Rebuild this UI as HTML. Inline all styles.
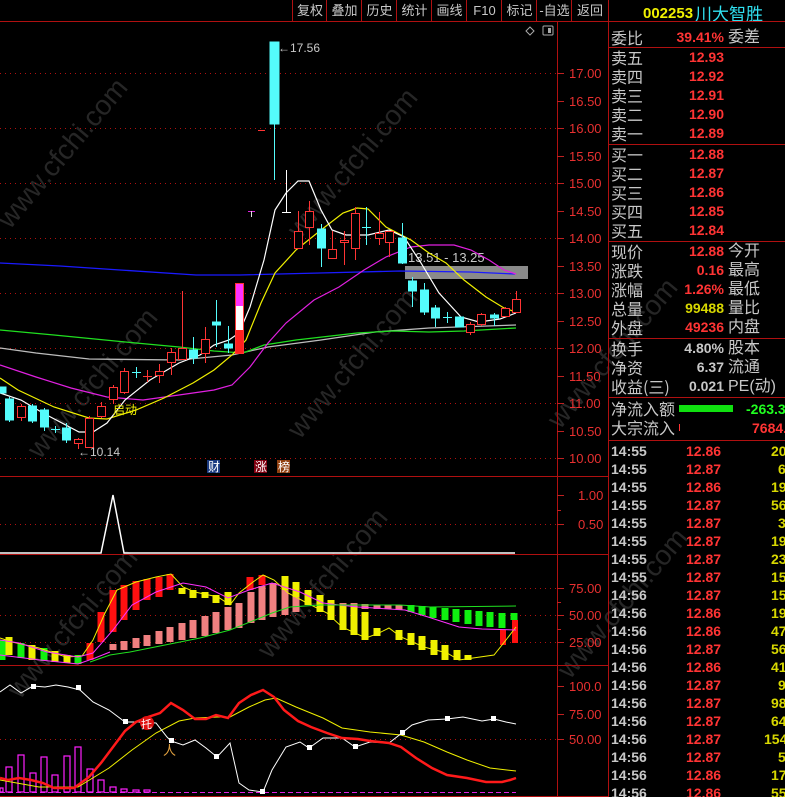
<!DOCTYPE html>
<html><head><meta charset="utf-8">
<style>
html,body{margin:0;padding:0;background:#000;width:785px;height:797px;overflow:hidden;position:relative;font-family:"Liberation Sans","Noto Sans CJK SC",sans-serif;}
.a{position:absolute;white-space:nowrap;line-height:1;}
.tb{position:absolute;top:0;height:21px;color:#c8c8c8;font-size:13px;line-height:21px;text-align:center;border-left:1px solid #b01010;}
.lb{position:absolute;left:611px;color:#c8c8c8;font-size:16px;line-height:19px;font-family:"Noto Sans CJK SC",sans-serif;}
.vl{position:absolute;width:110px;left:614px;text-align:right;font-size:14px;font-weight:bold;line-height:19px;}
.sx{position:absolute;left:728px;color:#c8c8c8;font-size:16px;line-height:19px;font-family:"Liberation Sans","Noto Sans CJK SC",sans-serif;}
.r{color:#ff3434}.y{color:#d8d800}.w{color:#c8c8c8}.g{color:#20ff20}
.tk{position:absolute;left:611px;width:200px;height:18px;font-size:14px;font-weight:bold;line-height:18px;}
.tk span{position:absolute;}
.hl{position:absolute;left:608px;width:177px;height:1px;background:#b01010;}
</style></head><body>
<svg width="785" height="797" style="position:absolute;left:0;top:0">
<g font-family="Liberation Sans,sans-serif" font-size="28" fill="#262626" >
<text transform="translate(10,230) rotate(-50)">www.cfchi.com</text>
<text transform="translate(300,240) rotate(-50)">www.cfchi.com</text>
<text transform="translate(40,460) rotate(-50)">www.cfchi.com</text>
<text transform="translate(300,440) rotate(-50)">www.cfchi.com</text>
<text transform="translate(20,700) rotate(-50)">www.cfchi.com</text>
<text transform="translate(270,660) rotate(-50)">www.cfchi.com</text>
<text transform="translate(570,680) rotate(-50)">www.cfchi.com</text>
<text transform="translate(560,430) rotate(-50)">www.cfchi.com</text>
</g>
<!-- frame lines -->
<g stroke="#b01010" stroke-width="1">
<line x1="0" y1="21.5" x2="608" y2="21.5"/>
<line x1="557.5" y1="21" x2="557.5" y2="797"/>
<line x1="608.5" y1="0" x2="608.5" y2="797"/>
<line x1="0" y1="476.5" x2="608" y2="476.5"/>
<line x1="0" y1="554.5" x2="608" y2="554.5"/>
<line x1="0" y1="665.5" x2="608" y2="665.5"/>
<line x1="0" y1="796.5" x2="608" y2="796.5"/>
</g>
<!-- grid -->
<g stroke="#b01010" stroke-dasharray="1,4">
<line x1="0" y1="73.5" x2="557" y2="73.5"/><line x1="0" y1="128.5" x2="557" y2="128.5"/>
<line x1="0" y1="183.5" x2="557" y2="183.5"/><line x1="0" y1="238.5" x2="557" y2="238.5"/>
<line x1="0" y1="293.5" x2="557" y2="293.5"/><line x1="0" y1="348.5" x2="557" y2="348.5"/>
<line x1="0" y1="403.5" x2="557" y2="403.5"/><line x1="0" y1="458.5" x2="557" y2="458.5"/>
<line x1="0" y1="524.5" x2="557" y2="524.5"/>
<line x1="0" y1="588.5" x2="557" y2="588.5"/><line x1="0" y1="615.5" x2="557" y2="615.5"/><line x1="0" y1="642.5" x2="557" y2="642.5"/>
<line x1="0" y1="739.5" x2="557" y2="739.5"/>
</g>
<!-- axis ticks -->
<g stroke="#c02020">
<line x1="557" y1="73.5" x2="564" y2="73.5"/><line x1="557" y1="101.5" x2="564" y2="101.5"/><line x1="557" y1="128.5" x2="564" y2="128.5"/><line x1="557" y1="156.5" x2="564" y2="156.5"/><line x1="557" y1="183.5" x2="564" y2="183.5"/><line x1="557" y1="211.5" x2="564" y2="211.5"/><line x1="557" y1="238.5" x2="564" y2="238.5"/><line x1="557" y1="266.5" x2="564" y2="266.5"/><line x1="557" y1="293.5" x2="564" y2="293.5"/><line x1="557" y1="321.5" x2="564" y2="321.5"/><line x1="557" y1="348.5" x2="564" y2="348.5"/><line x1="557" y1="376.5" x2="564" y2="376.5"/><line x1="557" y1="403.5" x2="564" y2="403.5"/><line x1="557" y1="431.5" x2="564" y2="431.5"/><line x1="557" y1="458.5" x2="564" y2="458.5"/>
<line x1="557" y1="495.5" x2="564" y2="495.5"/><line x1="557" y1="510.5" x2="561" y2="510.5"/><line x1="557" y1="524.5" x2="564" y2="524.5"/>
<line x1="557" y1="588.5" x2="564" y2="588.5"/><line x1="557" y1="602.5" x2="561" y2="602.5"/><line x1="557" y1="615.5" x2="564" y2="615.5"/><line x1="557" y1="629.5" x2="561" y2="629.5"/><line x1="557" y1="642.5" x2="564" y2="642.5"/>
<line x1="557" y1="686.5" x2="564" y2="686.5"/><line x1="557" y1="714.5" x2="564" y2="714.5"/><line x1="557" y1="739.5" x2="564" y2="739.5"/>
</g>
<g fill="#e83030" font-size="13" font-family="Liberation Sans,sans-serif">
<text x="569" y="78">17.00</text><text x="569" y="106">16.50</text><text x="569" y="133">16.00</text><text x="569" y="161">15.50</text><text x="569" y="188">15.00</text><text x="569" y="216">14.50</text><text x="569" y="243">14.00</text><text x="569" y="271">13.50</text><text x="569" y="298">13.00</text><text x="569" y="326">12.50</text><text x="569" y="353">12.00</text><text x="569" y="381">11.50</text><text x="569" y="408">11.00</text><text x="569" y="436">10.50</text><text x="569" y="463">10.00</text>
<text x="578" y="500">1.00</text><text x="578" y="529">0.50</text>
<text x="569" y="593">75.00</text><text x="569" y="620">50.00</text><text x="569" y="647">25.00</text>
<text x="569" y="691">100.0</text><text x="569" y="719">75.00</text><text x="569" y="744">50.00</text>
</g>
<!-- top icons -->
<path d="M530 27 L534 31 L530 35 L526 31 Z" fill="none" stroke="#aaa"/>
<rect x="543" y="26" width="10" height="9" fill="none" stroke="#aaa" rx="1"/><rect x="548" y="28" width="3" height="5" fill="#aaa"/>
<!-- gray box -->
<rect x="405" y="266" width="123" height="13" fill="#8a8a8a"/>
<text x="408" y="262" fill="#c8c8c8" font-size="13">13.51 - 13.25</text>
<!-- MA lines -->
<polyline fill="none" stroke="#1a1aff" stroke-width="1.3" points="0,263 60,266 120,270 196,275 240,275 320,273 400,271 470,272 515,274"/>
<polyline fill="none" stroke="#bdbdbd" stroke-width="1.3" points="0,348 36,353 89,359 179,360 232,355 268,347 321,340 375,332 429,328 516,325"/>
<polyline fill="none" stroke="#20e020" stroke-width="1.3" points="0,330 54,335 136,343 179,347 214,351 243,353 264,345 296,340 357,333 393,331 429,332 464,331 516,328"/>
<polyline fill="none" stroke="#e020e0" stroke-width="1.2" points="0,365 36,377 71,388 107,397 143,400 179,395 214,390 232,385 250,367 268,343 286,323 314,300 339,287 364,270 386,257 411,247 429,245 454,245 471,250 489,260 504,270 516,274"/>
<polyline fill="none" stroke="#f0f000" stroke-width="1.2" points="0,378 18,390 54,407 89,418 107,419 136,410 164,398 193,383 214,370 232,355 246,340 261,303 275,273 296,250 321,230 343,213 357,208 368,209 386,227 411,240 429,253 446,263 464,280 486,297 504,308 516,312"/>
<polyline fill="none" stroke="#ffffff" stroke-width="1.2" points="0,393 21,400 43,413 79,432 93,432 107,423 125,400 150,380 179,363 200,355 214,345 229,340 239,333 250,307 264,260 275,210 286,193 298,181 309,181 321,210 332,230 346,235 368,235 389,230 404,237 421,263 439,293 461,317 479,322 500,319 516,313"/>
<!-- candles -->
<g stroke="#ff3434" fill="#000" stroke-width="1">
<line x1="21.5" y1="404" x2="21.5" y2="421"/><rect x="17.5" y="406.5" width="8" height="11"/>
<line x1="78.5" y1="438" x2="78.5" y2="449"/><rect x="74.5" y="439.5" width="8" height="4"/>
<line x1="89.5" y1="416" x2="89.5" y2="448"/><rect x="85.5" y="418.5" width="8" height="29"/>
<line x1="101.5" y1="402" x2="101.5" y2="418"/><rect x="97.5" y="406.5" width="8" height="10"/>
<line x1="113.5" y1="385" x2="113.5" y2="404"/><rect x="109.5" y="387.5" width="8" height="12"/>
<line x1="124.5" y1="368" x2="124.5" y2="394"/><rect x="120.5" y="371.5" width="8" height="21"/>
<line x1="147.5" y1="370" x2="147.5" y2="382"/><line x1="143" y1="376.5" x2="152" y2="376.5"/>
<line x1="159.5" y1="364" x2="159.5" y2="383"/><rect x="155.5" y="371.5" width="8" height="4"/>
<line x1="171.5" y1="348" x2="171.5" y2="375"/><rect x="167.5" y="352.5" width="8" height="10"/>
<line x1="182.5" y1="291" x2="182.5" y2="360"/><rect x="178.5" y="348.5" width="8" height="11"/>
<line x1="205.5" y1="327" x2="205.5" y2="363"/><rect x="201.5" y="339.5" width="8" height="14"/>
<line x1="298.5" y1="211" x2="298.5" y2="248"/><rect x="294.5" y="231.5" width="8" height="17"/>
<line x1="309.5" y1="201" x2="309.5" y2="245"/><rect x="305.5" y="211.5" width="8" height="16"/>
<line x1="332.5" y1="231" x2="332.5" y2="259"/><rect x="328.5" y="249.5" width="8" height="9"/>
<line x1="344.5" y1="231" x2="344.5" y2="265"/><rect x="340.5" y="240.5" width="8" height="2"/>
<line x1="355.5" y1="207" x2="355.5" y2="260"/><rect x="351.5" y="213.5" width="8" height="35"/>
<line x1="379.5" y1="212" x2="379.5" y2="245"/><rect x="375.5" y="233.5" width="8" height="5"/>
<line x1="389.5" y1="231" x2="389.5" y2="257"/><rect x="385.5" y="231.5" width="8" height="11"/>
<line x1="470.5" y1="322" x2="470.5" y2="335"/><rect x="466.5" y="324.5" width="8" height="8"/>
<line x1="481.5" y1="313" x2="481.5" y2="326"/><rect x="477.5" y="314.5" width="8" height="10"/>
<line x1="505.5" y1="307" x2="505.5" y2="316"/><rect x="501.5" y="308.5" width="8" height="8"/>
<line x1="516.5" y1="291" x2="516.5" y2="312"/><rect x="512.5" y="299.5" width="8" height="13"/>
<line x1="258" y1="130.5" x2="265" y2="130.5"/>
</g>
<g stroke="#54fcfc" fill="#54fcfc">
<rect x="0" y="387" width="6" height="6"/>
<line x1="9.5" y1="397" x2="9.5" y2="422"/><rect x="5.5" y="399" width="8" height="21"/>
<line x1="32.5" y1="404" x2="32.5" y2="423"/><rect x="28.5" y="406" width="8" height="15"/>
<line x1="44.5" y1="408" x2="44.5" y2="431"/><rect x="40.5" y="410" width="8" height="17"/>
<line x1="55.5" y1="426" x2="55.5" y2="433"/><line x1="51" y1="429.5" x2="60" y2="429.5"/>
<line x1="66.5" y1="423" x2="66.5" y2="443"/><rect x="62.5" y="428" width="8" height="12"/>
<line x1="136.5" y1="367" x2="136.5" y2="378"/><line x1="132" y1="372.5" x2="141" y2="372.5"/>
<line x1="193.5" y1="337" x2="193.5" y2="364"/><rect x="189.5" y="350" width="8" height="8"/>
<line x1="216.5" y1="300" x2="216.5" y2="347"/><rect x="212.5" y="322" width="8" height="3"/>
<line x1="228.5" y1="326" x2="228.5" y2="353"/><rect x="224.5" y="344" width="8" height="4"/>
<line x1="274.5" y1="42" x2="274.5" y2="180"/><rect x="270" y="42" width="9" height="82"/>
<line x1="321.5" y1="224" x2="321.5" y2="267"/><rect x="317.5" y="229" width="8" height="19"/>
<line x1="366.5" y1="207" x2="366.5" y2="245"/><line x1="362" y1="227.5" x2="371" y2="227.5"/>
<line x1="402.5" y1="223" x2="402.5" y2="264"/><rect x="398.5" y="238" width="8" height="25"/>
<line x1="412.5" y1="277" x2="412.5" y2="307"/><rect x="408.5" y="281" width="8" height="10"/>
<line x1="424.5" y1="283" x2="424.5" y2="315"/><rect x="420.5" y="290" width="8" height="22"/>
<line x1="435.5" y1="305" x2="435.5" y2="327"/><rect x="431.5" y="308" width="8" height="10"/>
<line x1="447.5" y1="312" x2="447.5" y2="323"/><line x1="443" y1="317.5" x2="452" y2="317.5"/>
<rect x="455.5" y="317" width="8" height="10"/>
<line x1="494.5" y1="313" x2="494.5" y2="326"/><rect x="490.5" y="315" width="8" height="3"/>
</g>
<line x1="286.5" y1="170" x2="286.5" y2="213" stroke="#fff"/><line x1="282" y1="212.5" x2="291" y2="212.5" stroke="#fff"/>
<line x1="248" y1="211.5" x2="255" y2="211.5" stroke="#e020e0"/><line x1="251.5" y1="211" x2="251.5" y2="217" stroke="#ddd"/>
<rect x="235.5" y="283.5" width="8" height="70" fill="#ff2020" stroke="#ff3434"/>
<rect x="236" y="284" width="7" height="22" fill="#ff30ff"/><rect x="236" y="306" width="7" height="24" fill="#fff"/>
<text x="278" y="52" fill="#c8c8c8" font-size="12">←17.56</text>
<text x="78" y="456" fill="#c8c8c8" font-size="12">←10.14</text>
<text x="113" y="414" fill="#f0f000" font-size="12" font-family="Noto Sans CJK SC,sans-serif">启动</text>
<rect x="207" y="460" width="13" height="13" fill="#1a3a80"/><text x="208" y="471" fill="#fff" font-size="12" font-family="Noto Sans CJK SC,sans-serif">财</text>
<rect x="254" y="460" width="13" height="13" fill="#800010"/><text x="255" y="471" fill="#fff" font-size="12" font-family="Noto Sans CJK SC,sans-serif">涨</text>
<rect x="277" y="460" width="13" height="13" fill="#904010"/><text x="278" y="471" fill="#fff" font-size="12" font-family="Noto Sans CJK SC,sans-serif">榜</text>
<!-- panel 2 -->
<polyline fill="none" stroke="#fff" stroke-width="1.5" points="0,553 101,553 113,495 124,553 515,553"/>
<!-- panel 3 bars -->
<g stroke-width="7">
<line x1="2" y1="640" x2="2" y2="660" stroke="#10f010"/><line x1="9" y1="637" x2="9" y2="655" stroke="#f0f000"/>
<line x1="21" y1="643" x2="21" y2="658" stroke="#10f010"/><line x1="32" y1="645" x2="32" y2="660" stroke="#f0f000"/>
<line x1="44" y1="648" x2="44" y2="661" stroke="#10f010"/><line x1="55" y1="651" x2="55" y2="662" stroke="#f0f000"/>
<line x1="67" y1="655" x2="67" y2="663" stroke="#f0f000"/><line x1="78" y1="655" x2="78" y2="664" stroke="#10f010"/>
<line x1="90" y1="643" x2="90" y2="660" stroke="#ff1010"/><line x1="101" y1="612" x2="101" y2="642" stroke="#ff1010"/>
<line x1="113" y1="590" x2="113" y2="632" stroke="#ff1010"/><line x1="124" y1="585" x2="124" y2="620" stroke="#ff1010"/>
<line x1="136" y1="581" x2="136" y2="610" stroke="#ff1010"/><line x1="147" y1="579" x2="147" y2="600" stroke="#ff1010"/>
<line x1="159" y1="577" x2="159" y2="597" stroke="#ff1010"/><line x1="170" y1="574" x2="170" y2="590" stroke="#ff1010"/>
<line x1="182" y1="588" x2="182" y2="594" stroke="#f0f000"/><line x1="193" y1="590" x2="193" y2="598" stroke="#f0f000"/>
<line x1="205" y1="592" x2="205" y2="598" stroke="#f0f000"/><line x1="216" y1="595" x2="216" y2="603" stroke="#f0f000"/>
<line x1="228" y1="592" x2="228" y2="605" stroke="#f0f000"/>
<line x1="250" y1="577" x2="250" y2="590" stroke="#ff1010"/><line x1="262" y1="575" x2="262" y2="585" stroke="#ff1010"/>
</g>
<g stroke-width="7" stroke="#f08080">
<line x1="113" y1="644" x2="113" y2="650"/><line x1="124" y1="641" x2="124" y2="650"/><line x1="136" y1="638" x2="136" y2="648"/>
<line x1="147" y1="635" x2="147" y2="646"/><line x1="159" y1="631" x2="159" y2="644"/><line x1="170" y1="627" x2="170" y2="642"/>
<line x1="182" y1="623" x2="182" y2="640"/><line x1="193" y1="620" x2="193" y2="638"/><line x1="205" y1="616" x2="205" y2="636"/>
<line x1="216" y1="612" x2="216" y2="633"/><line x1="228" y1="607" x2="228" y2="630"/><line x1="239" y1="603" x2="239" y2="628"/>
<line x1="251" y1="592" x2="251" y2="623"/><line x1="262" y1="586" x2="262" y2="620"/><line x1="273" y1="583" x2="273" y2="617"/>
<line x1="285" y1="584" x2="285" y2="615"/><line x1="296" y1="590" x2="296" y2="612"/>
<line x1="320" y1="600" x2="320" y2="607"/><line x1="331" y1="603" x2="331" y2="607"/><line x1="343" y1="603" x2="343" y2="608"/>
<line x1="354" y1="603" x2="354" y2="608"/><line x1="365" y1="604" x2="365" y2="609"/><line x1="377" y1="605" x2="377" y2="609"/>
<line x1="388" y1="605" x2="388" y2="609"/><line x1="399" y1="605" x2="399" y2="610"/>
</g>
<g stroke-width="7" stroke="#f0f000">
<line x1="285" y1="576" x2="285" y2="590"/><line x1="296" y1="582" x2="296" y2="597"/><line x1="308" y1="590" x2="308" y2="605"/>
<line x1="320" y1="595" x2="320" y2="612"/><line x1="331" y1="600" x2="331" y2="620"/><line x1="343" y1="605" x2="343" y2="630"/>
<line x1="354" y1="607" x2="354" y2="635"/><line x1="365" y1="612" x2="365" y2="640"/><line x1="377" y1="628" x2="377" y2="636"/>
<line x1="399" y1="630" x2="399" y2="640"/><line x1="411" y1="633" x2="411" y2="645"/><line x1="422" y1="636" x2="422" y2="650"/>
<line x1="434" y1="640" x2="434" y2="655"/><line x1="445" y1="645" x2="445" y2="660"/><line x1="457" y1="650" x2="457" y2="660"/>
<line x1="468" y1="655" x2="468" y2="660"/>
</g>
<g stroke-width="7" stroke="#10f010">
<line x1="411" y1="605" x2="411" y2="612"/><line x1="422" y1="606" x2="422" y2="615"/><line x1="433" y1="607" x2="433" y2="618"/>
<line x1="445" y1="608" x2="445" y2="620"/><line x1="456" y1="609" x2="456" y2="622"/><line x1="468" y1="610" x2="468" y2="624"/>
<line x1="479" y1="611" x2="479" y2="626"/><line x1="490" y1="612" x2="490" y2="627"/><line x1="502" y1="613" x2="502" y2="628"/>
<line x1="514" y1="613" x2="514" y2="620"/>
</g>
<g stroke-width="6" stroke="#ff1010"><line x1="503" y1="630" x2="503" y2="645"/><line x1="515" y1="620" x2="515" y2="643"/></g>
<polyline fill="none" stroke="#f0f000" points="0,638 12,642 39,648 66,657 82,656 93,640 105,613 117,590 136,582 156,577 171,574 183,587 195,592 218,597 230,605 239,593 253,582 263,575 274,580 288,593 307,603 327,613 342,627 366,638 379,633 389,628 401,637 424,647 447,653 459,660 473,658 494,655 506,640 516,627"/>
<polyline fill="none" stroke="#ff30ff" points="0,640 19,643 47,652 78,657 93,653 113,630 132,605 156,592 183,583 206,587 228,598 249,590 272,583 300,592 323,603 339,605 358,607 405,610 428,617 459,627 482,629 516,630"/>
<polyline fill="none" stroke="#20e020" points="90,662 110,655 130,652 150,648 200,638 230,630 260,618 272,613 290,607 320,605 400,605 430,607 516,606"/>
<polyline fill="none" stroke="#ff30ff" points="0,655 40,660 78,664 95,658 110,652"/>
<!-- panel 4 -->
<line x1="0" y1="792.5" x2="516" y2="792.5" stroke="#e020e0" stroke-dasharray="5,3"/>
<g fill="none" stroke="#ff20ff" stroke-width="1.2">
<rect x="0" y="788" width="3" height="4"/><rect x="6" y="767" width="6" height="25"/><rect x="18" y="755" width="6" height="37"/>
<rect x="30" y="773" width="6" height="19"/><rect x="41" y="757" width="6" height="35"/><rect x="52" y="775" width="6" height="17"/>
<rect x="64" y="756" width="6" height="36"/><rect x="75" y="747" width="6" height="45"/><rect x="87" y="769" width="6" height="23"/>
<rect x="98" y="780" width="6" height="12"/><rect x="110" y="787" width="6" height="5"/><rect x="121" y="789" width="6" height="3"/>
<rect x="133" y="790" width="6" height="2"/><rect x="144" y="790" width="6" height="2"/>
</g>
<polyline fill="none" stroke="#f0f000" points="0,780 39,787 78,787 109,768 132,750 156,733 179,721 195,718 218,717 230,717 249,707 265,700 276,698 296,707 323,718 342,728 370,732 401,735 424,742 447,752 467,760 490,768 516,771"/>
<polyline fill="none" stroke="#ffffff" points="0,692 10,685 21,693 33,686 45,687 56,685 68,687 80,690 93,702 109,710 125,722 140,722 156,723 167,737 171,741 183,745 195,740 206,748 217,757 230,743 239,783 249,790 263,792 272,770 286,747 300,742 309,748 323,738 342,738 355,747 370,742 389,743 402,733 412,725 428,720 447,719 463,717 482,721 494,719 506,722 516,724"/>
<g fill="#fff"><rect x="31" y="684" width="5" height="5"/><rect x="76" y="685" width="5" height="5"/><rect x="123" y="719" width="5" height="5"/><rect x="169" y="738" width="5" height="5"/><rect x="214" y="754" width="5" height="5"/><rect x="260" y="789" width="5" height="5"/><rect x="307" y="745" width="5" height="5"/><rect x="353" y="744" width="5" height="5"/><rect x="400" y="730" width="5" height="5"/><rect x="445" y="716" width="5" height="5"/><rect x="491" y="716" width="5" height="5"/></g>
<polyline fill="none" stroke="#ff1a1a" stroke-width="2.5" points="0,778 8,780 19,778 31,780 43,783 54,788 74,788 89,777 101,763 113,747 125,731 136,722 148,717 160,713 171,703 183,710 195,719 206,719 216,715 228,718 239,703 251,695 263,690 274,697 284,710 298,721 311,727 327,733 342,738 358,739 370,741 389,743 401,747 416,758 432,768 447,775 467,778 486,782 502,782 510,780 516,778"/>
<circle cx="147" cy="723" r="7" fill="#e01010"/><text x="141" y="728" fill="#fff" font-size="11" font-family="Noto Sans CJK SC,sans-serif">托</text>
<text x="163" y="755" fill="#e0a040" font-size="13">人</text>
</svg>

<!-- toolbar -->
<div class="tb" style="left:292px;width:34px">复权</div>
<div class="tb" style="left:326px;width:35px">叠加</div>
<div class="tb" style="left:361px;width:35px">历史</div>
<div class="tb" style="left:396px;width:35px">统计</div>
<div class="tb" style="left:431px;width:35px">画线</div>
<div class="tb" style="left:466px;width:35px">F10</div>
<div class="tb" style="left:501px;width:35px">标记</div>
<div class="tb" style="left:536px;width:35px">-自选</div>
<div class="tb" style="left:571px;width:36px">返回</div>

<!-- right panel -->
<div class="a" style="left:643px;top:6px;font-size:15px;font-weight:bold;color:#f0f000">002253</div>
<div class="a" style="left:695px;top:4px;font-size:17px;color:#30e0f0;font-family:'Noto Sans CJK SC',sans-serif">川大智胜</div>
<div class="hl" style="top:21px"></div>
<div class="lb" style="top:28px">委比</div><div class="vl r" style="top:28px">39.41%</div><div class="sx" style="top:28px">委差</div>
<div class="hl" style="top:47px"></div>
<div class="lb" style="top:48px">卖五</div><div class="vl r" style="top:48px">12.93</div>
<div class="lb" style="top:67px">卖四</div><div class="vl r" style="top:67px">12.92</div>
<div class="lb" style="top:86px">卖三</div><div class="vl r" style="top:86px">12.91</div>
<div class="lb" style="top:105px">卖二</div><div class="vl r" style="top:105px">12.90</div>
<div class="lb" style="top:124px">卖一</div><div class="vl r" style="top:124px">12.89</div>
<div class="hl" style="top:144px"></div>
<div class="lb" style="top:145px">买一</div><div class="vl r" style="top:145px">12.88</div>
<div class="lb" style="top:164px">买二</div><div class="vl r" style="top:164px">12.87</div>
<div class="lb" style="top:183px">买三</div><div class="vl r" style="top:183px">12.86</div>
<div class="lb" style="top:202px">买四</div><div class="vl r" style="top:202px">12.85</div>
<div class="lb" style="top:221px">买五</div><div class="vl r" style="top:221px">12.84</div>
<div class="hl" style="top:241px"></div>
<div class="lb" style="top:242px">现价</div><div class="vl r" style="top:242px">12.88</div><div class="sx" style="top:242px">今开</div>
<div class="lb" style="top:261px">涨跌</div><div class="vl r" style="top:261px">0.16</div><div class="sx" style="top:261px">最高</div>
<div class="lb" style="top:280px">涨幅</div><div class="vl r" style="top:280px">1.26%</div><div class="sx" style="top:280px">最低</div>
<div class="lb" style="top:299px">总量</div><div class="vl y" style="top:299px">99488</div><div class="sx" style="top:299px">量比</div>
<div class="lb" style="top:318px">外盘</div><div class="vl r" style="top:318px">49236</div><div class="sx" style="top:318px">内盘</div>
<div class="hl" style="top:338px"></div>
<div class="lb" style="top:339px">换手</div><div class="vl w" style="top:339px">4.80%</div><div class="sx" style="top:339px">股本</div>
<div class="lb" style="top:358px">净资</div><div class="vl w" style="top:358px">6.37</div><div class="sx" style="top:358px">流通</div>
<div class="lb" style="top:377px">收益(三)</div><div class="vl w" style="top:377px">0.021</div><div class="sx" style="top:377px">PE(动)</div>
<div class="hl" style="top:397px"></div>
<div class="lb" style="top:399px">净流入额</div>
<div style="position:absolute;left:679px;top:405px;width:54px;height:7px;background:#10e010"></div>
<div class="a g" style="left:746px;top:402px;font-size:14px;font-weight:bold">-263.3</div>
<div class="lb" style="top:418px">大宗流入</div>
<div style="position:absolute;left:679px;top:424px;width:1px;height:7px;background:#ff3434"></div>
<div class="a r" style="left:752px;top:421px;font-size:14px;font-weight:bold">7684.</div>
<div class="hl" style="top:440px"></div>

<div class="tk" style="top:442px"><span class="w">14:55</span><span class="r" style="left:75px">12.86</span><span class="y" style="left:160px">209</span></div>
<div class="tk" style="top:460px"><span class="w">14:55</span><span class="r" style="left:75px">12.87</span><span class="y" style="left:167px">62</span></div>
<div class="tk" style="top:478px"><span class="w">14:55</span><span class="r" style="left:75px">12.86</span><span class="y" style="left:160px">191</span></div>
<div class="tk" style="top:496px"><span class="w">14:55</span><span class="r" style="left:75px">12.87</span><span class="y" style="left:160px">563</span></div>
<div class="tk" style="top:514px"><span class="w">14:55</span><span class="r" style="left:75px">12.87</span><span class="y" style="left:167px">35</span></div>
<div class="tk" style="top:532px"><span class="w">14:55</span><span class="r" style="left:75px">12.87</span><span class="y" style="left:160px">190</span></div>
<div class="tk" style="top:550px"><span class="w">14:55</span><span class="r" style="left:75px">12.87</span><span class="y" style="left:160px">231</span></div>
<div class="tk" style="top:568px"><span class="w">14:55</span><span class="r" style="left:75px">12.87</span><span class="y" style="left:160px">150</span></div>
<div class="tk" style="top:586px"><span class="w">14:56</span><span class="r" style="left:75px">12.87</span><span class="y" style="left:160px">152</span></div>
<div class="tk" style="top:604px"><span class="w">14:56</span><span class="r" style="left:75px">12.86</span><span class="y" style="left:160px">190</span></div>
<div class="tk" style="top:622px"><span class="w">14:56</span><span class="r" style="left:75px">12.86</span><span class="y" style="left:160px">470</span></div>
<div class="tk" style="top:640px"><span class="w">14:56</span><span class="r" style="left:75px">12.87</span><span class="y" style="left:160px">560</span></div>
<div class="tk" style="top:658px"><span class="w">14:56</span><span class="r" style="left:75px">12.86</span><span class="y" style="left:160px">410</span></div>
<div class="tk" style="top:676px"><span class="w">14:56</span><span class="r" style="left:75px">12.87</span><span class="y" style="left:167px">93</span></div>
<div class="tk" style="top:694px"><span class="w">14:56</span><span class="r" style="left:75px">12.87</span><span class="y" style="left:160px">980</span></div>
<div class="tk" style="top:712px"><span class="w">14:56</span><span class="r" style="left:75px">12.87</span><span class="y" style="left:160px">640</span></div>
<div class="tk" style="top:730px"><span class="w">14:56</span><span class="r" style="left:75px">12.87</span><span class="y" style="left:153px">1540</span></div>
<div class="tk" style="top:748px"><span class="w">14:56</span><span class="r" style="left:75px">12.87</span><span class="y" style="left:167px">52</span></div>
<div class="tk" style="top:766px"><span class="w">14:56</span><span class="r" style="left:75px">12.86</span><span class="y" style="left:160px">170</span></div>
<div class="tk" style="top:784px"><span class="w">14:56</span><span class="r" style="left:75px">12.86</span><span class="y" style="left:160px">550</span></div>
</body></html>
